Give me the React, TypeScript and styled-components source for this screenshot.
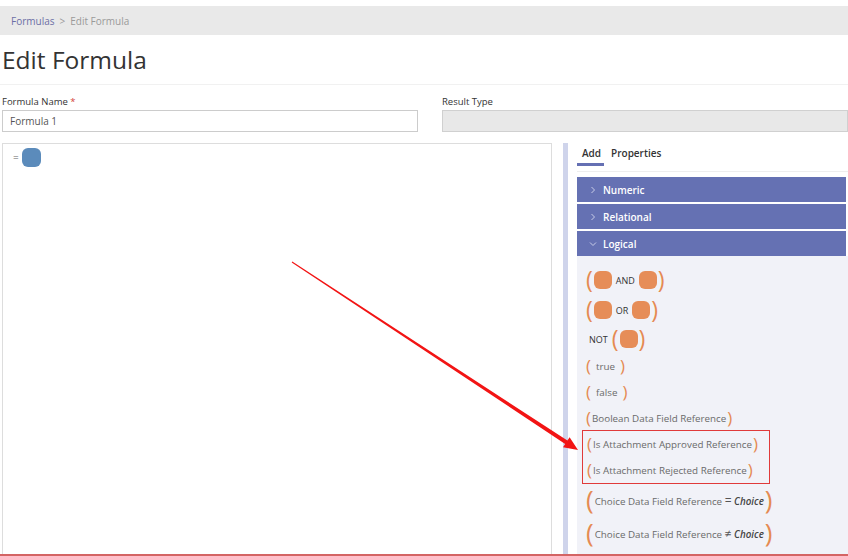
import React from 'react';
import styled, { createGlobalStyle } from 'styled-components';

const GlobalStyle = createGlobalStyle`
    html, body {
        margin: 0;
        padding: 0;
        background: #ffffff;
    }
    body {
        font-family: 'Open Sans', 'Noto Sans', sans-serif;
        color: #333333;
    }
`;

const Page = styled.div`
    position: relative;
    width: 848px;
    height: 556px;
    overflow: hidden;
    display: flex;
    flex-direction: column;
    box-sizing: border-box;
    border-bottom: 2px solid #d46464;
`;

const Breadcrumb = styled.div`
    margin-top: 6px;
    height: 29px;
    background: #e9e9e9;
    display: flex;
    align-items: center;
    padding-left: 11px;
    font-size: 10px;
    color: #9a9a9a;
    gap: 5px;
`;

const CrumbLink = styled.span`
    color: #6c6fa6;
`;

const Heading = styled.h1`
    margin: 8px 0 0;
    padding: 0 0 7px 2px;
    font-size: 24.5px;
    line-height: 34px;
    font-weight: 400;
    color: #333333;
    border-bottom: 1px solid #f1f1f1;
`;

const FormRow = styled.div`
    display: grid;
    grid-template-columns: 416px 1fr;
    column-gap: 24px;
    margin-top: 11px;
    padding-left: 2px;
`;

const Field = styled.div`
    display: flex;
    flex-direction: column;
`;

const Label = styled.label`
    font-size: 9.5px;
    line-height: 12px;
    color: #333333;
    margin-bottom: 2px;
`;

const Required = styled.span`
    color: #d43f3a;
`;

const Input = styled.div<{ $disabled?: boolean }>`
    height: 22px;
    box-sizing: border-box;
    border: 1px solid ${p => (p.$disabled ? '#d0d0d0' : '#cccccc')};
    background: ${p => (p.$disabled ? '#e8e8e8' : '#ffffff')};
    font-size: 10px;
    line-height: 20px;
    padding-left: 7px;
    color: #555555;
`;

const Workspace = styled.div`
    flex: 1;
    display: flex;
    margin-top: 11px;
    padding-left: 2px;
    min-height: 0;
`;

const Editor = styled.div`
    width: 550px;
    box-sizing: border-box;
    border: 1px solid #dddddd;
    border-bottom: none;
    padding: 4px 0 0 10px;
    display: flex;
    align-items: flex-start;
    gap: 3px;
`;

const Equals = styled.span`
    font-size: 10px;
    line-height: 19px;
    color: #666666;
`;

const Slot = styled.span<{ $color: string; $size: number }>`
    display: inline-block;
    width: ${p => p.$size}px;
    height: ${p => p.$size}px;
    border-radius: 6px;
    background: ${p => p.$color};
    flex: none;
`;

const Splitter = styled.div`
    width: 5px;
    margin-left: 11px;
    background: #cfd4eb;
`;

const Side = styled.div`
    flex: 1;
    margin-left: 9px;
    display: flex;
    flex-direction: column;
    min-width: 0;
`;

const TabBar = styled.div`
    display: flex;
    gap: 2px;
    padding-bottom: 5px;
    border-bottom: 1px solid #eeeeee;
`;

const Tab = styled.div<{ $active?: boolean }>`
    padding: 3px 3px 3px 5px;
    font-size: 10px;
    line-height: 14px;
    font-weight: 600;
    color: #333333;
    border-bottom: 3px solid ${p => (p.$active ? '#6570b3' : 'transparent')};
`;

const Accordion = styled.div`
    margin-top: 5px;
    display: flex;
    flex-direction: column;
    gap: 2px;
    margin-right: 2px;
`;

const Header = styled.div`
    height: 25px;
    background: #6571b3;
    color: #ffffff;
    display: flex;
    align-items: center;
    padding-left: 12px;
    gap: 6px;
    font-size: 10px;
    font-weight: 600;
`;

const Chevron = styled.svg`
    width: 8px;
    height: 8px;
    flex: none;
`;

const Content = styled.div`
    flex: 1;
    background: #f1f2f8;
    padding: 9px 0 0 5px;
    display: flex;
    flex-direction: column;
    align-items: flex-start;
`;

const Row = styled.div<{ $h: number }>`
    height: ${p => p.$h}px;
    display: flex;
    align-items: center;
    gap: 1px;
    padding-left: 4px;
    white-space: nowrap;
`;

const Paren = styled.span<{ $size: number }>`
    font-size: ${p => p.$size}px;
    line-height: 1;
    color: #e58a52;
    font-weight: 400;
    position: relative;
    top: -1px;
`;

const Keyword = styled.span`
    font-size: 9px;
    color: #333333;
    padding: 0 3px;
`;

const ItemText = styled.span<{ $pad?: number }>`
    font-size: 9.8px;
    color: #6a6a6a;
    padding: 0 ${p => p.$pad ?? 0}px;
`;

const Operator = styled.span`
    font-size: 12px;
    color: #555555;
`;

const ChoiceWord = styled.span`
    font-style: italic;
    font-weight: 600;
    color: #444444;
`;

const Highlight = styled.div`
    border: 1px solid #e03a3a;
    width: 188px;
    box-sizing: border-box;
    margin-top: -1px;
`;

const Overlay = styled.svg`
    position: absolute;
    left: 0;
    top: 0;
    pointer-events: none;
`;

const ORANGE = '#e68d58';

const ChevronRight = () => (
    <Chevron viewBox="0 0 8 8">
        <path d="M2.5 1 L5.5 4 L2.5 7" fill="none" stroke="#c9cde8" strokeWidth="1" />
    </Chevron>
);

const ChevronDown = () => (
    <Chevron viewBox="0 0 8 8">
        <path d="M1 2.5 L4 5.5 L7 2.5" fill="none" stroke="#c9cde8" strokeWidth="1" />
    </Chevron>
);

function BinaryRow({ op }: { op: string }) {
    return (
        <Row $h={30}>
            <Paren $size={23}>(</Paren>
            <Slot $color={ORANGE} $size={18} />
            <Keyword>{op}</Keyword>
            <Slot $color={ORANGE} $size={18} />
            <Paren $size={23}>)</Paren>
        </Row>
    );
}

function TextRow({ text, pad }: { text: string; pad?: number }) {
    return (
        <Row $h={26}>
            <Paren $size={17}>(</Paren>
            <ItemText $pad={pad}>{text}</ItemText>
            <Paren $size={17}>)</Paren>
        </Row>
    );
}

function ChoiceRow({ op, h }: { op: string; h: number }) {
    return (
        <Row $h={h}>
            <Paren $size={26}>(</Paren>
            <ItemText>
                Choice Data Field Reference <Operator>{op}</Operator> <ChoiceWord>Choice</ChoiceWord>
            </ItemText>
            <Paren $size={26}>)</Paren>
        </Row>
    );
}

function App() {
    return (
        <Page>
            <GlobalStyle />
            <Breadcrumb>
                <CrumbLink>Formulas</CrumbLink>
                <span>&gt;</span>
                <span>Edit Formula</span>
            </Breadcrumb>
            <Heading>Edit Formula</Heading>
            <FormRow>
                <Field>
                    <Label>
                        Formula Name <Required>*</Required>
                    </Label>
                    <Input>Formula 1</Input>
                </Field>
                <Field>
                    <Label>Result Type</Label>
                    <Input $disabled />
                </Field>
            </FormRow>
            <Workspace>
                <Editor>
                    <Equals>=</Equals>
                    <Slot $color="#5b8bbb" $size={19} />
                </Editor>
                <Splitter />
                <Side>
                    <TabBar>
                        <Tab $active>Add</Tab>
                        <Tab>Properties</Tab>
                    </TabBar>
                    <Accordion>
                        <Header>
                            <ChevronRight />
                            Numeric
                        </Header>
                        <Header>
                            <ChevronRight />
                            Relational
                        </Header>
                        <Header>
                            <ChevronDown />
                            Logical
                        </Header>
                    </Accordion>
                    <Content>
                        <BinaryRow op="AND" />
                        <BinaryRow op="OR" />
                        <Row $h={28}>
                            <Keyword>NOT</Keyword>
                            <Paren $size={23}>(</Paren>
                            <Slot $color={ORANGE} $size={18} />
                            <Paren $size={23}>)</Paren>
                        </Row>
                        <TextRow text="true" pad={4} />
                        <TextRow text="false" pad={4} />
                        <TextRow text="Boolean Data Field Reference" />
                        <Highlight>
                            <TextRow text="Is Attachment Approved Reference" />
                            <TextRow text="Is Attachment Rejected Reference" />
                        </Highlight>
                        <ChoiceRow op="=" h={32} />
                        <ChoiceRow op="≠" h={34} />
                    </Content>
                </Side>
            </Workspace>
            <Overlay width="848" height="556" viewBox="0 0 848 556">
                <polygon
                    points="292.3,261.6 567.4,440.6 569.6,437.3 578,450 563,447.3 565.2,444 291.7,262.4"
                    fill="#f21414"
                />
            </Overlay>
        </Page>
    );
}

export default App;
